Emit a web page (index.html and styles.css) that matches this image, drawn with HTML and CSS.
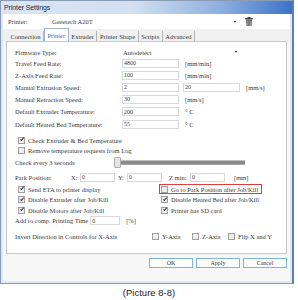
FILE: index.html
```html
<!DOCTYPE html>
<html>
<head>
<meta charset="utf-8">
<link rel="stylesheet" href="styles.css">
</head>
<body>
<div class="window">
  <div class="titlebar"><span class="title">Printer Settings</span></div>
  <div class="client">
    <div class="printer-row">
      <span class="plabel">Printer:</span>
      <div class="combo pcombo"><span>Geeetech A20T</span><span class="arrow"></span></div>
      <svg class="trash" width="8" height="9" viewBox="0 0 8 9"><rect x="0" y="1" width="8" height="1.3" fill="#444"/><rect x="2.5" y="0" width="3" height="1.2" fill="#444"/><path d="M1 2.6h6l-0.5 6.2h-5z" fill="#555"/><path d="M2.6 3.5v4.5M4 3.5v4.5M5.4 3.5v4.5" stroke="#ccc" stroke-width="0.6"/></svg>
    </div>
    <div class="tabs">
      <span class="tab">Connection</span><span class="tab sel">Printer</span><span class="tab">Extruder</span><span class="tab">Printer Shape</span><span class="tab">Scripts</span><span class="tab">Advanced</span>
    </div>
    <div class="panel">
      <div class="row r10"><span class="lbl">Firmware Type:</span><div class="combo fcombo"><span>Autodetect</span><span class="arrow"></span></div></div>
      <div class="row"><span class="lbl">Travel Feed Rate:</span><span class="inp">4800</span><span class="unit">[mm/min]</span></div>
      <div class="row"><span class="lbl">Z-Axis Feed Rate:</span><span class="inp">100</span><span class="unit">[mm/min]</span></div>
      <div class="row"><span class="lbl">Manual Extrusion Speed:</span><span class="inp">2</span><span class="inp inp2">20</span><span class="unit">[mm/s]</span></div>
      <div class="row"><span class="lbl">Manual Retraction Speed:</span><span class="inp">30</span><span class="unit">[mm/s]</span></div>
      <div class="row r13"><span class="lbl">Default Extruder Temperature:</span><span class="inp">200</span><span class="unit">° C</span></div>
      <div class="row"><span class="lbl">Default Heated Bed Temperature:</span><span class="inp">55</span><span class="unit">° C</span></div>
      <div class="crow first"><span class="cb on"></span><span>Check Extruder &amp; Bed Temperature</span></div>
      <div class="crow"><span class="cb"></span><span>Remove temperature requests from Log</span></div>
      <div class="row srow"><span class="slbl">Check every 3 seconds</span><div class="slider"><span class="thumb"></span><span class="track"></span></div></div>
      <div class="row prow"><span class="lbl plbl">Park Position:</span><span class="ax">X:</span><span class="inp pin">0</span><span class="ax">Y:</span><span class="inp pin">0</span><span class="ax zax">Z min:</span><span class="inp pin">0</span><span class="unit">[mm]</span></div>
      <div class="grid">
        <div class="crow g"><span class="cb on"></span><span>Send ETA to printer display</span></div>
        <div class="crow g"><span class="redbox"><span class="cb"></span><span>Go to Park Position after Job/Kill</span></span></div>
        <div class="crow g"><span class="cb on"></span><span>Disable Extruder after Job/Kill</span></div>
        <div class="crow g"><span class="cb on"></span><span>Disable Heated Bed after Job/Kill</span></div>
        <div class="crow g"><span class="cb on"></span><span>Disable Motors after Job/Kill</span></div>
        <div class="crow g"><span class="cb on"></span><span>Printer has SD card</span></div>
      </div>
      <div class="row arow"><span class="albl">Add to comp. Printing Time</span><span class="inp ain">0</span><span class="unit">[%]</span></div>
      <div class="row irow"><span class="lbl ilbl">Invert Direction in Controls for X-Axis</span><span class="icb"><span class="cb"></span>Y-Axis</span><span class="icb i2"><span class="cb"></span>Z-Axis</span><span class="icb i3"><span class="cb"></span>Flip X and Y</span></div>
    </div>
    <div class="buttons"><span class="btn">OK</span><span class="btn">Apply</span><span class="btn">Cancel</span></div>
  </div>
</div>
<div class="caption">(Picture 8-8)</div>
</body>
</html>
```
FILE: styles.css
```css
html, body { margin: 0; padding: 0; background: #fff; }
body { width: 298px; height: 300px; overflow: hidden; font-family: "Liberation Serif", serif; font-size: 6.5px; color: #3a3a3a; white-space: nowrap; }
.window { width: 291px; height: 282px; border: 1px solid #8a9cb4; border-right: 2px solid #5c7fb4; box-sizing: content-box; display: flex; flex-direction: column; background: #dfe8f3; }
.titlebar { height: 13px; flex: none; display: flex; align-items: center; padding-left: 3px; background: linear-gradient(to right, #dbe5f1 0%, #d3e0f1 45%, #8fb0e0 75%, #3d72c9 100%); }
.title { font-family: "Liberation Sans", sans-serif; font-size: 7px; color: #1b2a3d; letter-spacing: -0.1px; }
.client { flex: 1; margin: 0 2px 2px 2px; background: #f7f7f7; display: flex; flex-direction: column; }
.printer-row { height: 15px; display: flex; align-items: center; padding-left: 5px; background: #fff; }
.plabel { width: 44px; }
.combo { height: 8px; display: flex; align-items: center; justify-content: space-between; }
.pcombo { width: 186px; }
.arrow { width: 0; height: 0; border-left: 1.5px solid transparent; border-right: 1.5px solid transparent; border-top: 2px solid #222; margin-right: 2px; }
.trash { margin-left: 7px; }
.tabs { height: 12px; display: flex; align-items: flex-end; padding-left: 5px; background: #f0f0f0; }
.tab { height: 10px; display: flex; align-items: center; padding: 0 2.5px; border-right: 1px solid #b5b5b5; background: #f0f0f0; }
.tab.sel { height: 12px; background: #fff; border: 1px solid #9fb4cc; border-bottom: none; color: #3e6fb5; }
.panel { height: 213px; margin: 0 3px; background: #fff; border: 1px solid #c8c8c8; box-sizing: border-box; padding-top: 5px; padding-left: 8px; display: flex; flex-direction: column; }
.row { height: 12px; display: flex; align-items: center; flex: none; }
.row.r10 { height: 10px; }
.row.r13 { height: 13px; }
.lbl { width: 107px; flex: none; }
.fcombo { width: 116px; margin-left: 1px; }
.inp { width: 54px; height: 7px; border: 1px solid #d8d8d8; display: flex; align-items: center; padding-left: 1px; font-size: 6px; flex: none; }
.inp2 { margin-left: 4px; }
.unit { margin-left: 6px; }
.crow { height: 10px; display: flex; align-items: center; padding-left: 3px; flex: none; }
.crow.first { margin-top: 5px; }
.cb { width: 5px; height: 5px; border: 1px solid #a0a0a0; background: #eee; margin-right: 3px; flex: none; position: relative; }
.cb.on::after { content: ""; position: absolute; left: 1.5px; top: -0.5px; width: 1.3px; height: 3px; border-right: 1px solid #333; border-bottom: 1px solid #333; transform: rotate(40deg); }
.srow { height: 15px; }
.slbl { width: 99px; flex: none; }
.slider { display: flex; align-items: center; height: 10px; }
.thumb { width: 5px; height: 9px; background: #e4e4e4; border: 1px solid #b0b0b0; border-radius: 1px; }
.track { width: 124px; height: 3px; background: #8a8a8a; border-top: 1px solid #c0c0c0; border-bottom: 1px solid #a8a8a8; }
.prow { height: 14px; }
.plbl { width: 56px; }
.ax { width: 9px; flex: none; }
.zax { width: 21px; margin-left: 4px; }
.pin { width: 32px; margin-right: 3px; }
.grid { display: grid; grid-template-columns: 143px 130px; grid-auto-rows: 10.5px; }
.crow.g { height: 10.5px; }
.redbox { display: flex; align-items: center; border: 1px solid #e23b3b; height: 8px; padding: 0 3px 0 1px; margin-left: -2px; }
.arow { height: 10px; }
.albl { flex: none; }
.ain { width: 27px; margin-left: 2px; }
.irow { margin-top: 5px; }
.ilbl { width: 137px; }
.icb { display: flex; align-items: center; width: 40px; flex: none; }
.i3 { width: 50px; margin-left: -4px; }
.buttons { flex: 1; display: flex; justify-content: flex-end; align-items: center; gap: 3px; padding-right: 3px; padding-bottom: 10px; background: #f7f7f7; }
.btn { width: 42px; height: 8px; border: 1px solid #7fb5d2; background: #fdfdfd; display: flex; align-items: center; justify-content: center; font-size: 6px; }
.caption { text-align: center; font-family: "Liberation Sans", sans-serif; font-size: 9.5px; color: #222; margin-top: 3px; }
```
